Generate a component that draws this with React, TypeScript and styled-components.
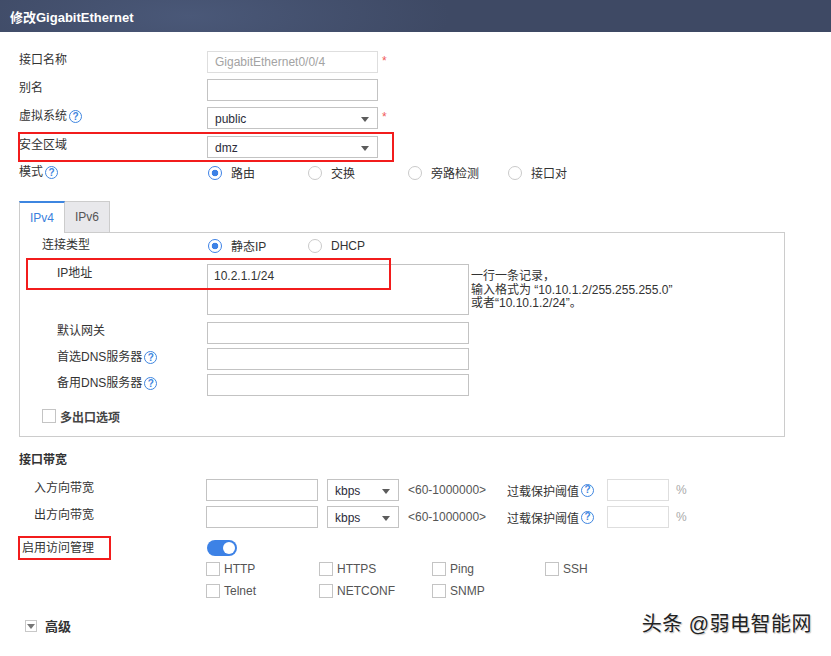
import React from 'react';
import styled, { createGlobalStyle } from 'styled-components';

const GlobalStyle = createGlobalStyle`
  html, body {
    margin: 0;
    padding: 0;
    background: #fff;
  }
  body {
    font-family: "Liberation Sans", "Noto Sans CJK SC", sans-serif;
    font-size: 12px;
    color: #333;
  }
`;

const Page = styled.div`
  position: relative;
  width: 831px;
  height: 656px;
  overflow: hidden;
  background: #fff;
`;

const Header = styled.div`
  height: 32px;
  display: flex;
  align-items: center;
  padding-left: 10px;
  background: radial-gradient(ellipse 260px 70px at 190px 16px, #4a5878 0%, #3e4964 100%);
  color: #fff;
  font-size: 13px;
  font-weight: bold;
`;

const Body = styled.div`
  padding: 19px 0 0 19px;
`;

const Field = styled.div<{ $h?: number; $mb?: number; $indent?: number }>`
  position: relative;
  display: flex;
  align-items: center;
  min-height: ${p => p.$h ?? 22}px;
  margin-bottom: ${p => p.$mb ?? 6}px;
  padding-left: ${p => p.$indent ?? 0}px;
`;

const Label = styled.div<{ $w: number }>`
  width: ${p => p.$w}px;
  flex-shrink: 0;
  align-self: flex-start;
  display: flex;
  align-items: center;
  gap: 2px;
  line-height: 19px;
  color: #333;
`;

/* red annotation frame drawn over a row */
const Mark = styled.span<{ $l: number; $t: number; $w: number; $h: number }>`
  position: absolute;
  left: ${p => p.$l}px;
  top: ${p => p.$t}px;
  width: ${p => p.$w}px;
  height: ${p => p.$h}px;
  box-sizing: border-box;
  border: 2px solid #f21c1c;
  pointer-events: none;
`;

const Help = styled.span`
  display: inline-flex;
  align-items: center;
  justify-content: center;
  box-sizing: border-box;
  width: 13px;
  height: 13px;
  border: 1px solid #3f86e0;
  border-radius: 50%;
  color: #3f86e0;
  font-size: 10px;
  font-weight: bold;
  line-height: 1;
`;

const TextInput = styled.input<{ $w: number; $faint?: boolean }>`
  box-sizing: border-box;
  width: ${p => p.$w}px;
  height: 22px;
  margin: 0;
  padding: 0 7px;
  border: 1px solid ${p => (p.$faint ? '#dedede' : '#c3c3c3')};
  border-radius: 0;
  background: #fff;
  font-family: inherit;
  font-size: 12px;
  color: ${p => (p.$faint ? '#a3a3a3' : '#333')};
  outline: none;
`;

const TextArea = styled.div`
  box-sizing: border-box;
  width: 262px;
  height: 51px;
  padding: 3px 6px;
  border: 1px solid #c3c3c3;
  line-height: 16px;
  color: #333;
`;

const Select = styled.div<{ $w: number }>`
  position: relative;
  box-sizing: border-box;
  width: ${p => p.$w}px;
  height: 22px;
  padding: 0 7px;
  border: 1px solid #c3c3c3;
  line-height: 22px;
  color: #2b2b3a;
  &::after {
    content: '';
    position: absolute;
    right: 8px;
    top: 9px;
    border-left: 4px solid transparent;
    border-right: 4px solid transparent;
    border-top: 5px solid #5c5c5c;
  }
`;

const Req = styled.span`
  align-self: flex-start;
  margin: 3px 0 0 4px;
  color: #f05a5a;
  line-height: 14px;
`;

const RadioGroup = styled.div`
  display: flex;
  padding-left: 1px;
`;

const RadioOpt = styled.div`
  width: 100px;
  display: flex;
  align-items: center;
  gap: 9px;
  color: #333;
`;

const RadioDot = styled.span<{ $on?: boolean }>`
  box-sizing: border-box;
  width: 14px;
  height: 14px;
  border-radius: 50%;
  border: 1px solid ${p => (p.$on ? '#3d82e6' : '#cacaca')};
  background: ${p => (p.$on ? 'radial-gradient(circle, #3d82e6 0 3px, #fff 3.6px)' : '#fff')};
`;

const TabBar = styled.div`
  display: flex;
  margin-top: 19px;
  margin-bottom: -1px;
  position: relative;
  z-index: 1;
`;

const Tab = styled.div<{ $active?: boolean }>`
  box-sizing: border-box;
  height: 32px;
  padding: 0 10px;
  display: flex;
  align-items: center;
  border: 1px solid #cccccc;
  border-left: ${p => (p.$active ? '1px solid #cccccc' : 'none')};
  border-top: ${p => (p.$active ? '2px solid #3e86e0' : '1px solid #cccccc')};
  border-bottom: ${p => (p.$active ? 'none' : '1px solid #cccccc')};
  background: ${p => (p.$active ? '#fff' : '#e8e8eb')};
  color: ${p => (p.$active ? '#3a7fdc' : '#555')};
  font-size: 12px;
`;

const Panel = styled.div`
  box-sizing: border-box;
  width: 766px;
  padding: 3px 0 11px 22px;
  border: 1px solid #cccccc;
`;

const Hint = styled.div`
  align-self: flex-start;
  margin: 6px 0 0 2px;
  line-height: 13.5px;
  color: #333;
`;

const Check = styled.span`
  display: inline-block;
  box-sizing: border-box;
  width: 14px;
  height: 14px;
  border: 1px solid #c4c4c4;
  background: #fff;
  flex-shrink: 0;
`;

const CheckRow = styled.div`
  display: flex;
  align-items: center;
  gap: 4px;
  margin-top: 11px;
  height: 18px;
  font-weight: bold;
  color: #444;
`;

const SectionTitle = styled.div`
  margin-top: 15px;
  margin-bottom: 11px;
  line-height: 16px;
  font-weight: bold;
  color: #333;
`;

const RangeText = styled.span`
  width: 99px;
  margin-left: 9px;
  color: #555;
`;

const SubLabel = styled.span`
  width: 100px;
  display: flex;
  align-items: center;
  gap: 2px;
  color: #333;
`;

const Unit = styled.span`
  margin-left: 7px;
  color: #aaa;
`;

const FramedLabel = styled.div`
  box-sizing: border-box;
  width: 93px;
  height: 24px;
  margin-left: -1px;
  margin-right: 96px;
  padding-left: 2px;
  border: 2px solid #f21c1c;
  line-height: 20px;
  color: #333;
`;

const Toggle = styled.span<{ $on?: boolean }>`
  position: relative;
  width: 30px;
  height: 16px;
  border-radius: 8px;
  background: ${p => (p.$on ? '#3d82e6' : '#ccc')};
  &::after {
    content: '';
    position: absolute;
    top: 2px;
    left: ${p => (p.$on ? '16px' : '2px')};
    width: 12px;
    height: 12px;
    border-radius: 50%;
    background: #fff;
  }
`;

const ProtoGrid = styled.div`
  display: grid;
  grid-template-columns: repeat(4, 113px);
  row-gap: 8px;
  margin: 2px 0 0 187px;
`;

const Proto = styled.div`
  display: flex;
  align-items: center;
  gap: 4px;
  height: 14px;
  color: #555;
`;

const Advanced = styled.div`
  display: flex;
  align-items: center;
  gap: 8px;
  margin: 18px 0 0 6px;
  font-weight: bold;
  font-size: 13px;
  color: #333;
`;

const Caret = styled.span`
  position: relative;
  box-sizing: border-box;
  width: 12px;
  height: 12px;
  border: 1px solid #c8c8c8;
  &::after {
    content: '';
    position: absolute;
    left: 1px;
    top: 3px;
    border-left: 4px solid transparent;
    border-right: 4px solid transparent;
    border-top: 5px solid #777;
  }
`;

const Watermark = styled.div`
  position: absolute;
  right: 19px;
  bottom: 19px;
  font-size: 20px;
  color: #222;
  letter-spacing: 0.5px;
  text-shadow: 0 0 2px #fff, 1px 1px 1px #bbb;
`;

const modes = ['路由', '交换', '旁路检测', '接口对'];
const protocols = ['HTTP', 'HTTPS', 'Ping', 'SSH', 'Telnet', 'NETCONF', 'SNMP'];

const Radios = ({ items, on }: { items: string[]; on: number }) => (
  <RadioGroup>
    {items.map((t, i) => (
      <RadioOpt key={t}>
        <RadioDot $on={i === on} />
        {t}
      </RadioOpt>
    ))}
  </RadioGroup>
);

const BandwidthRow = ({ label, last }: { label: string; last?: boolean }) => (
  <Field $indent={15} $mb={last ? 8 : 5}>
    <Label $w={172}>{label}</Label>
    <TextInput $w={112} readOnly value="" />
    <Select $w={72} style={{ marginLeft: 9 }}>kbps</Select>
    <RangeText>&lt;60-1000000&gt;</RangeText>
    <SubLabel>
      过载保护阈值<Help>?</Help>
    </SubLabel>
    <TextInput $w={62} $faint readOnly value="" />
    <Unit>%</Unit>
  </Field>
);

const App = (): JSX.Element => {
  return (
    <Page>
      <GlobalStyle />
      <Header>修改GigabitEthernet</Header>
      <Body>
        <Field>
          <Label $w={188}>接口名称</Label>
          <TextInput $w={171} $faint readOnly value="GigabitEthernet0/0/4" />
          <Req>*</Req>
        </Field>
        <Field>
          <Label $w={188}>别名</Label>
          <TextInput $w={171} readOnly value="" />
        </Field>
        <Field $mb={7}>
          <Label $w={188}>
            虚拟系统<Help>?</Help>
          </Label>
          <Select $w={171}>public</Select>
          <Req>*</Req>
        </Field>
        <Field $mb={5}>
          <Mark $l={-1} $t={-4} $w={376} $h={30} />
          <Label $w={188}>安全区域</Label>
          <Select $w={171}>dmz</Select>
        </Field>
        <Field $h={19} $mb={0}>
          <Label $w={188}>
            模式<Help>?</Help>
          </Label>
          <Radios items={modes} on={0} />
        </Field>

        <TabBar>
          <Tab $active>IPv4</Tab>
          <Tab>IPv6</Tab>
        </TabBar>
        <Panel>
          <Field $h={19} $mb={9}>
            <Label $w={165}>连接类型</Label>
            <Radios items={['静态IP', 'DHCP']} on={0} />
          </Field>
          <Field $mb={7}>
            <Mark $l={-16} $t={-6} $w={365} $h={32} />
            <Label $w={165} style={{ paddingLeft: 15, boxSizing: 'border-box' }}>
              IP地址
            </Label>
            <TextArea>10.2.1.1/24</TextArea>
            <Hint>
              一行一条记录，
              <br />
              输入格式为 “10.10.1.2/255.255.255.0”
              <br />
              或者“10.10.1.2/24”。
            </Hint>
          </Field>
          <Field $mb={4} $indent={15}>
            <Label $w={150}>默认网关</Label>
            <TextInput $w={262} readOnly value="" />
          </Field>
          <Field $mb={4} $indent={15}>
            <Label $w={150}>
              首选DNS服务器<Help>?</Help>
            </Label>
            <TextInput $w={262} readOnly value="" />
          </Field>
          <Field $mb={0} $indent={15}>
            <Label $w={150}>
              备用DNS服务器<Help>?</Help>
            </Label>
            <TextInput $w={262} readOnly value="" />
          </Field>
          <CheckRow>
            <Check />
            多出口选项
          </CheckRow>
        </Panel>

        <SectionTitle>接口带宽</SectionTitle>
        <BandwidthRow label="入方向带宽" />
        <BandwidthRow label="出方向带宽" last />

        <Field $h={24} $mb={0}>
          <FramedLabel>启用访问管理</FramedLabel>
          <Toggle $on />
        </Field>
        <ProtoGrid>
          {protocols.map(p => (
            <Proto key={p}>
              <Check />
              {p}
            </Proto>
          ))}
        </ProtoGrid>
        <Advanced>
          <Caret />
          高级
        </Advanced>
      </Body>
      <Watermark>头条 @弱电智能网</Watermark>
    </Page>
  );
};

export default App;
